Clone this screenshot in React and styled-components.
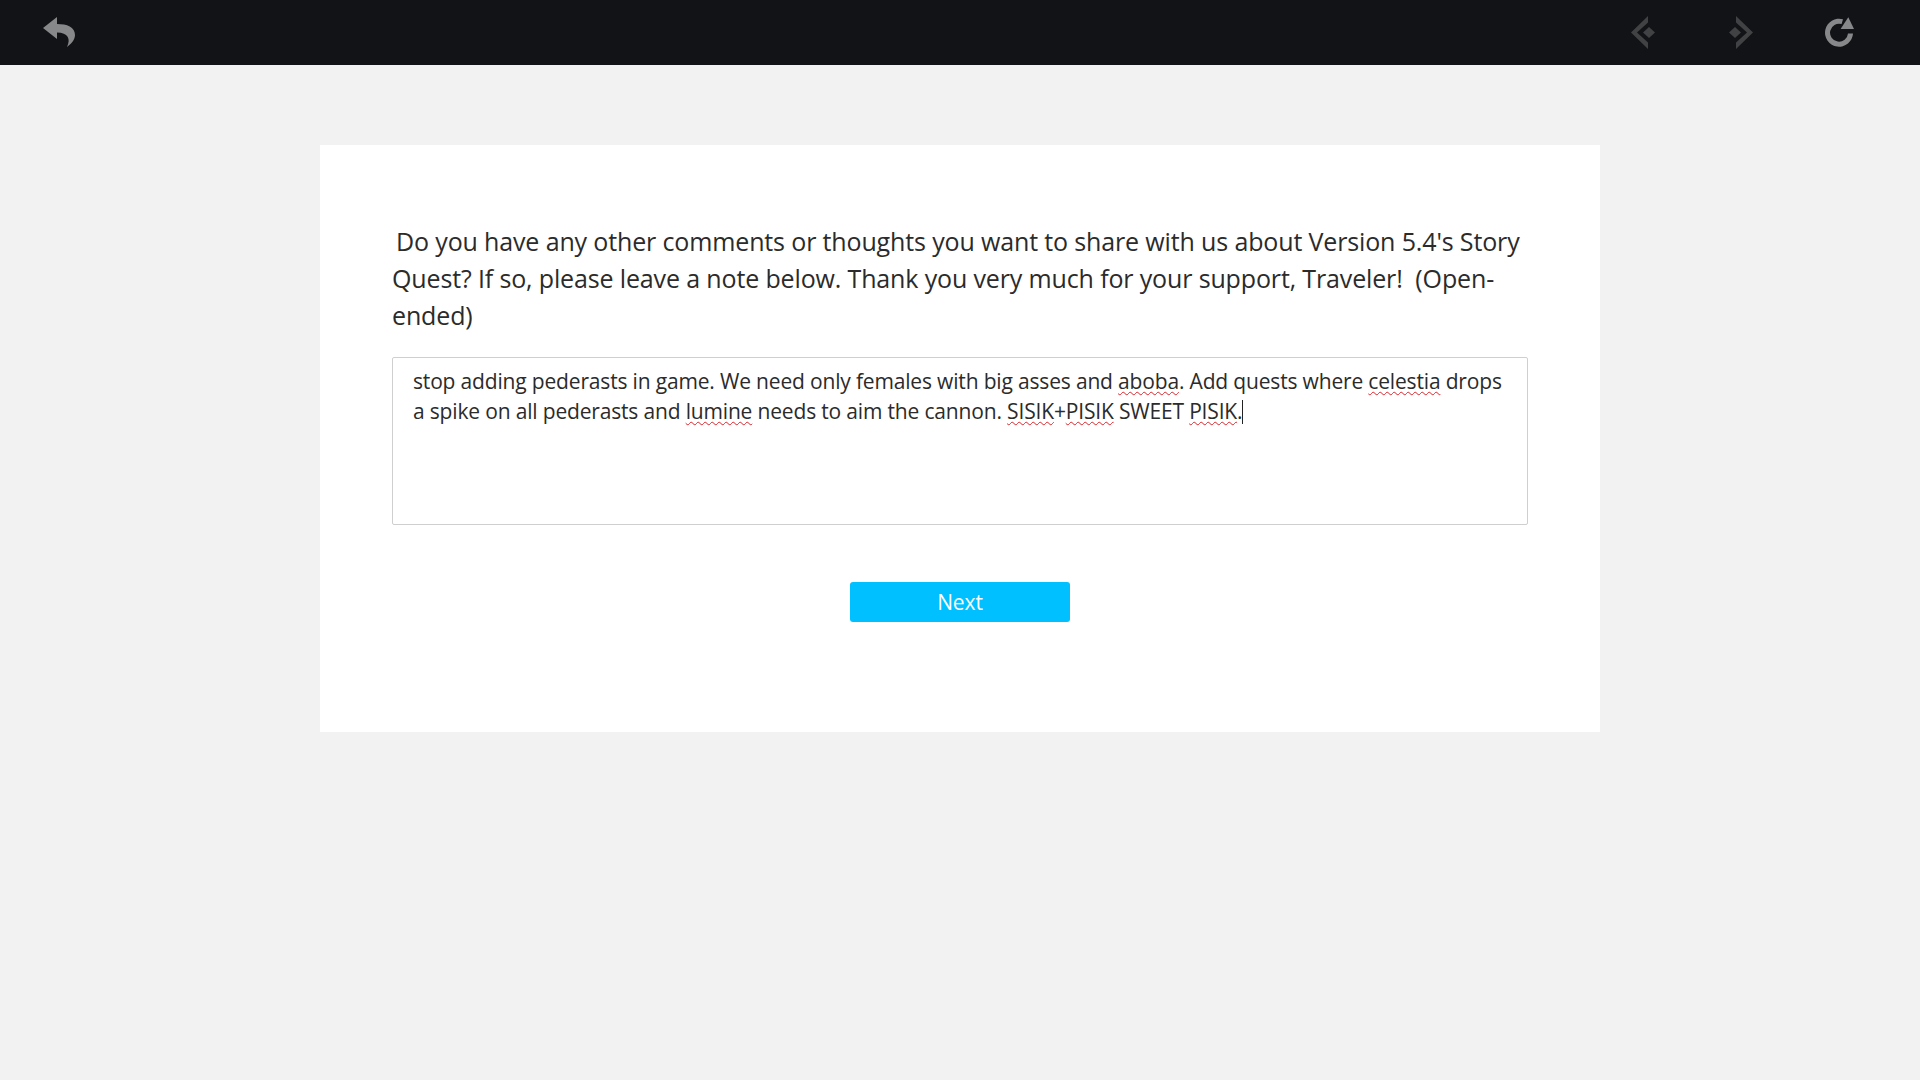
import React from "react";
import styled, { createGlobalStyle } from "styled-components";

const Global = createGlobalStyle`
  html, body { margin: 0; padding: 0; background: #f2f2f2; }
  body { font-family: "Open Sans", "Noto Sans", "Liberation Sans", sans-serif; }
`;

const Page = styled.div`
  width: 1920px;
  height: 1080px;
  overflow: hidden;
  display: flex;
  flex-direction: column;
`;

const TopBar = styled.header`
  height: 65px;
  flex: none;
  background: #121316;
  display: flex;
  align-items: center;
  justify-content: space-between;
  padding: 0 32px 0 10px;
`;

const NavGroup = styled.div`
  display: flex;
`;

const IconButton = styled.button`
  width: 98px;
  height: 65px;
  padding: 0;
  border: 0;
  background: none;
  display: flex;
  align-items: center;
  justify-content: center;
  svg { display: block; fill: ${p => (p.$dim ? "#414244" : "#87888a")}; }
`;

const Main = styled.main`
  flex: 1;
  padding-top: 80px;
  display: flex;
  justify-content: center;
  align-items: flex-start;
`;

const Card = styled.section`
  width: 1280px;
  height: 587px;
  box-sizing: border-box;
  background: #fff;
  padding: 78px 72px 0;
  display: flex;
  flex-direction: column;
`;

const Question = styled.div`
  font-size: 25px;
  line-height: 37px;
  letter-spacing: -0.14px;
  color: #2b2b2b;
  margin: 0 0 23px;
`;

const Line = styled.div`
  white-space: pre;
  margin-left: ${p => p.$indent || 0}px;
`;

const Answer = styled.div`
  width: 1136px;
  height: 168px;
  box-sizing: border-box;
  border: 1px solid #cfcfcf;
  border-radius: 2px;
  padding: 8px 20px;
  font-size: 21px;
  line-height: 30px;
  letter-spacing: -0.17px;
  color: #2b2b2b;
`;

const Misspelt = styled.span`
  text-decoration: underline wavy #d8262c 1px;
  text-underline-offset: 2px;
`;

const Caret = styled.span`
  display: inline-block;
  width: 1px;
  height: 24px;
  background: #222;
  vertical-align: -5px;
`;

const NextButton = styled.button`
  align-self: center;
  margin-top: 57px;
  width: 220px;
  height: 40px;
  border: 0;
  border-radius: 3px;
  background: #00c0ff;
  color: #fff;
  font-family: inherit;
  font-size: 21px;
  letter-spacing: -0.1px;
  font-weight: 500;
  padding: 0;
`;

const BackIcon = () => (
  <svg width="33" height="31" viewBox="0 0 33 31">
    <path d="M0 11 L14 0 V7 C24 7 32 10 32 18 C32 23 28 27 24 30 C28 22 25 15.5 14 15.5 V22 Z" />
  </svg>
);

const PrevIcon = () => (
  <svg width="24" height="34" viewBox="0 0 24 34">
    <path d="M0 16.5 L17 0 V6.5 L6 16.5 L17 26.5 V33 Z" />
    <path d="M18 11 L24 16.5 L18 22 L12 16.5 Z" />
  </svg>
);

const NextIcon = () => (
  <svg width="24" height="34" viewBox="0 0 24 34">
    <path d="M24 16.5 L7 0 V6.5 L18 16.5 L7 26.5 V33 Z" />
    <path d="M6 11 L12 16.5 L6 22 L0 16.5 Z" />
  </svg>
);

const RefreshIcon = () => (
  <svg width="30" height="31" viewBox="0 0 30 31">
    <path d="M19 2.3 A14 14 0 1 0 29 16.5 H24 A9 9 0 1 1 17.6 7.1 Z" />
    <path d="M24.3 0.3 L30 12 H16.6 Z" />
  </svg>
);

export default function App() {
  return (
    <Page>
      <Global />
      <TopBar>
        <IconButton><BackIcon /></IconButton>
        <NavGroup>
          <IconButton $dim><PrevIcon /></IconButton>
          <IconButton $dim><NextIcon /></IconButton>
          <IconButton><RefreshIcon /></IconButton>
        </NavGroup>
      </TopBar>
      <Main>
        <Card>
          <Question>
            <Line $indent={4}>Do you have any other comments or thoughts you want to share with us about Version 5.4's Story</Line>
            <Line>Quest? If so, please leave a note below. Thank you very much for your support, Traveler!  (Open-</Line>
            <Line>ended)</Line>
          </Question>
          <Answer>
            <Line>stop adding pederasts in game. We need only females with big asses and <Misspelt>aboba</Misspelt>. Add quests where <Misspelt>celestia</Misspelt> drops</Line>
            <Line>a spike on all pederasts and <Misspelt>lumine</Misspelt> needs to aim the cannon. <Misspelt>SISIK</Misspelt>+<Misspelt>PISIK</Misspelt> SWEET <Misspelt>PISIK</Misspelt>.<Caret /></Line>
          </Answer>
          <NextButton>Next</NextButton>
        </Card>
      </Main>
    </Page>
  );
}
